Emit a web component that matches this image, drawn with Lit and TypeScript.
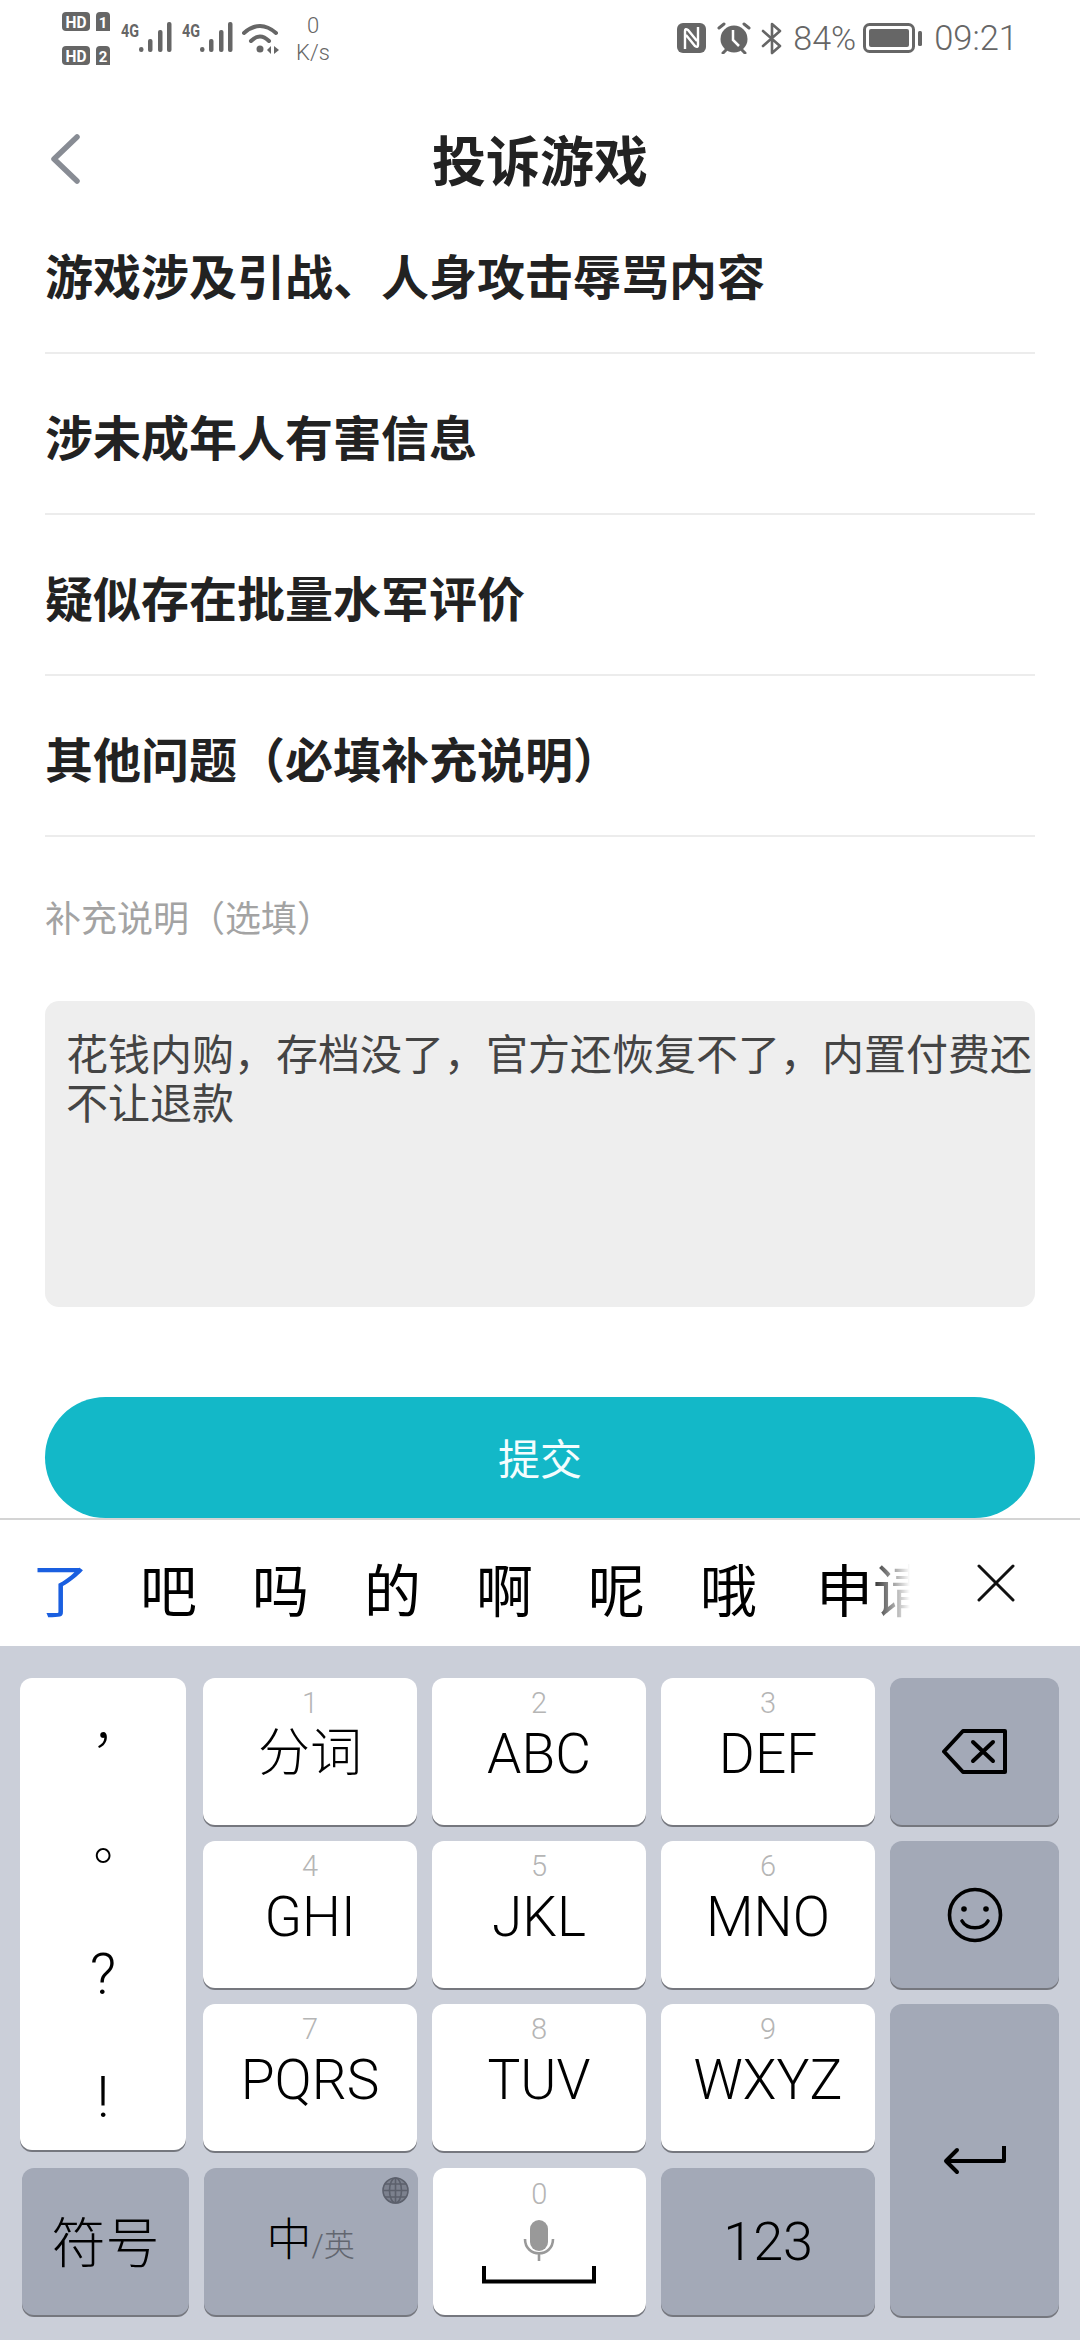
import { LitElement, html, css, svg } from "lit";
import { customElement } from "lit/decorators.js";

const signal = html`<svg class="sig" width="51" height="34" viewBox="0 -4 51 34">
  <text x="0" y="15" font-family="Roboto, sans-serif" font-weight="700" font-size="19" fill="#666" textLength="18" lengthAdjust="spacingAndGlyphs">4G</text>
  <rect x="18" y="25" width="4.5" height="5" rx="2.2" fill="#666"/>
  <rect x="27" y="17" width="4.5" height="13" rx="2" fill="#666"/>
  <rect x="37" y="8" width="4.5" height="22" rx="2" fill="#666"/>
  <rect x="46" y="0" width="4.5" height="30" rx="2" fill="#666"/>
</svg>`;

const sim = svg`<svg width="48" height="53" viewBox="0 0 48 53" font-family="Roboto, sans-serif" font-weight="700" font-size="17" text-anchor="middle">
  <rect x="0" y="0" width="28" height="19" rx="4" fill="#666"/>
  <text x="14" y="15.500" fill="#fff" textLength="21" lengthAdjust="spacingAndGlyphs">HD</text>
  <path d="M34 4a4 4 0 0 1 4-4h6a4 4 0 0 1 4 4v15h-14z" fill="#666"/>
  <text x="41" y="15.500" fill="#fff" font-size="15">1</text>
  <rect x="0" y="34" width="28" height="19" rx="4" fill="#666"/>
  <text x="14" y="49.500" fill="#fff" textLength="21" lengthAdjust="spacingAndGlyphs">HD</text>
  <path d="M34 38a4 4 0 0 1 4-4h6a4 4 0 0 1 4 4v15h-14z" fill="#666"/>
  <text x="41" y="49.500" fill="#fff" font-size="15">2</text>
</svg>`;

const wifi = html`<svg width="38" height="31" viewBox="0 0 38 31" fill="none" stroke="#666" stroke-linecap="round">
  <path d="M2 10Q18 -4 34 10" stroke-width="4"/>
  <path d="M9 18Q18 9 27 18" stroke-width="4"/>
  <circle cx="18" cy="26" r="3.5" fill="#666" stroke="none"/>
  <path d="M29 23l-4 4 4 4zM32 23l5 4-5 4z" fill="#666" stroke="none"/>
</svg>`;

const nfc = html`<svg width="29" height="30" viewBox="0 0 29 30">
  <rect width="29" height="30" rx="6" fill="#666"/>
  <path d="M8 26V8Q8 5 11 7L20 18M21 4V22Q21 25 18 23L9 12" fill="none" stroke="#fff" stroke-width="2.400"/>
</svg>`;

const alarm = html`<svg width="34" height="32" viewBox="0 0 34 32">
  <circle cx="17" cy="17" r="13.500" fill="#666"/>
  <path d="M16 8v10l6 6" fill="none" stroke="#fff" stroke-width="2.500"/>
  <path d="M2 6l5-4M32 6l-5-4M6 31l3-3M28 31l-3-3" stroke="#666" stroke-width="3" stroke-linecap="round"/>
</svg>`;

const bluetooth = html`<svg width="22" height="33" viewBox="0 0 22 33" fill="none" stroke="#666" stroke-width="2.600" stroke-linejoin="round" stroke-linecap="round">
  <path d="M2 9l17 15-8 7V2l8 7L2 24"/>
</svg>`;

const battery = html`<svg width="59" height="30" viewBox="0 0 59 30">
  <rect x="1.500" y="1.500" width="49" height="27" rx="5" fill="none" stroke="#666" stroke-width="3"/>
  <rect x="6" y="6" width="40" height="18" rx="2" fill="#666"/>
  <rect x="55" y="8" width="4" height="15" rx="1.500" fill="#666"/>
</svg>`;

const backspace = html`<svg width="66" height="45" viewBox="0 0 66 45" fill="none" stroke="#000" stroke-width="4" stroke-linejoin="round" stroke-linecap="round">
  <path d="M21 2H63V43H21L2 22.500Z"/>
  <path d="M31 13L51 32M51 13L31 32"/>
</svg>`;

const smile = html`<svg width="56" height="56" viewBox="0 0 56 56" fill="none" stroke="#000" stroke-width="3.600" stroke-linecap="round">
  <circle cx="28" cy="28" r="25.500"/>
  <circle cx="17" cy="22" r="2.800" fill="#000" stroke="none"/>
  <circle cx="39" cy="22" r="2.800" fill="#000" stroke="none"/>
  <path d="M15 34C20 43 36 43 41 34"/>
</svg>`;

const enter = html`<svg width="63" height="30" viewBox="0 0 63 30" fill="none" stroke="#000" stroke-width="4" stroke-linejoin="round">
  <path d="M61 1V16H4"/>
  <path d="M14 5L3 16L14 27" stroke-linecap="round"/>
</svg>`;

const globe = html`<svg width="27" height="27" viewBox="0 0 27 27" fill="none" stroke="#5c606c" stroke-width="1.600">
  <circle cx="13.500" cy="13.500" r="12.500" fill="#7c818e"/>
  <ellipse cx="13.500" cy="13.500" rx="6" ry="12.500"/>
  <path d="M13.500 1V26M1 13.500H26M3 7H24M3 20H24"/>
</svg>`;

const mic = html`<svg width="32" height="41" viewBox="0 0 32 41" fill="none" stroke="#999">
  <rect x="7" y="0" width="18" height="31" rx="9" fill="#999" stroke="none"/>
  <path d="M2 19C2 38 30 38 30 19" stroke-width="2.600"/>
  <path d="M16 33V41" stroke-width="2.600"/>
</svg>`;

const spaceBar = html`<svg width="114" height="18" viewBox="0 0 114 18" fill="none" stroke="#000" stroke-width="4">
  <path d="M2 0V15.500H112V0"/>
</svg>`;

const REASONS = [
  "游戏涉及引战、人身攻击辱骂内容",
  "涉未成年人有害信息",
  "疑似存在批量水军评价",
  "其他问题（必填补充说明）",
];
const CANDIDATES = ["吧", "吗", "的", "啊", "呢", "哦", "申请"];
const NUM_KEYS = [
  ["1", "分词"], ["2", "ABC"], ["3", "DEF"],
  ["4", "GHI"], ["5", "JKL"], ["6", "MNO"],
  ["7", "PQRS"], ["8", "TUV"], ["9", "WXYZ"],
];

@customElement("app-root")
export class AppRoot extends LitElement {
  static styles = css`
    :host {
      display: block;
      width: 1080px;
      height: 2340px;
      background: #fff;
      overflow: hidden;
      font-family: "Noto Sans CJK SC", sans-serif;
    }
    .status {
      height: 76px;
      padding: 0 62px 0 62px;
      display: flex;
      align-items: center;
      justify-content: space-between;
      color: #666;
      font-family: Roboto, sans-serif;
      font-weight: 300;
    }
    .status__group {
      display: flex;
      align-items: center;
    }
    .sig { margin-bottom: 6px; }
    .gap-9 { width: 9px; }
    .gap-10 { width: 10px; }
    .gap-11 { width: 11px; }
    .speed {
      width: 36px;
      margin-left: 15px;
      padding-top: 2px;
      text-align: center;
      font-size: 22px;
      line-height: 27px;
    }
    .pct { font-size: 34px; margin: 0 7px 0 10px; }
    .time { font-size: 34.500px; margin-left: 12px; }
    .header {
      height: 117px;
      box-sizing: border-box;
      padding-top: 48px;
      display: grid;
      grid-template-columns: 1fr auto 1fr;
      align-items: center;
    }
    .header__back { padding-left: 49px; display: flex; }
    .header__title {
      font-size: 54px;
      font-weight: 700;
      color: #222;
      line-height: 1;
    }
    .reasons { padding: 0 45px; }
    .reason {
      height: 161px;
      box-sizing: border-box;
      border-bottom: 2px solid #ececec;
      display: flex;
      align-items: center;
      padding-top: 2px;
      font-size: 48px;
      font-weight: 700;
      color: #222;
    }
    .note-label {
      margin: 0 45px;
      height: 164px;
      padding-top: 54px;
      box-sizing: border-box;
      font-size: 36px;
      line-height: 50px;
      color: #a3a3a3;
    }
    .note {
      margin: 0 45px;
      height: 306px;
      box-sizing: border-box;
      padding: 26px 0 0 21px;
      background: #eee;
      border-radius: 14px;
      font-size: 42px;
      line-height: 49px;
      color: #444;
    }
    .submit {
      margin: 90px 45px 0;
      height: 121px;
      border-radius: 61px;
      background: #13b8c8;
      color: #f4fdfe;
      font-size: 42px;
      padding-bottom: 2px;
      box-sizing: border-box;
      display: flex;
      align-items: center;
      justify-content: center;
    }
    .cands {
      height: 128px;
      box-sizing: border-box;
      border-top: 2px solid #d4d4d4;
      display: flex;
      background: #fff;
    }
    .cands__list {
      width: 912px;
      box-sizing: border-box;
      padding: 8px 0 0 32px;
      display: flex;
      align-items: center;
      gap: 55px;
      overflow: hidden;
      white-space: nowrap;
      font-size: 57px;
      color: #000;
      -webkit-mask-image: linear-gradient(to right, #000 865px, transparent 910px);
      mask-image: linear-gradient(to right, #000 865px, transparent 910px);
    }
    .cands__list span:last-child { margin-left: 4px; }
    .cands__active { color: #1a5fe0; margin-right: -4px; }
    .cands__close {
      flex: 1;
      display: flex;
      justify-content: center;
      padding-top: 44px;
    }
    .kb {
      height: 694px;
      box-sizing: border-box;
      padding: 32px 21px 0 20px;
      background: #cbcfd9;
      display: flex;
      gap: 15px;
    }
    .kb__left { width: 855px; }
    .kb__top { display: flex; gap: 17px; }
    .kb__grid {
      display: grid;
      grid-template-columns: repeat(3, 214px);
      grid-auto-rows: 147px;
      gap: 16px 15px;
    }
    .kb__bottom {
      display: flex;
      gap: 15px;
      margin-top: 17px;
      padding-left: 2px;
    }
    .kb__right {
      width: 169px;
      display: flex;
      flex-direction: column;
      gap: 16px;
    }
    .key {
      height: 147px;
      box-sizing: border-box;
      position: relative;
      border-radius: 12px;
      background: #fff;
      box-shadow: 0 2px 0 #75777e;
      color: #000;
      display: flex;
      flex-direction: column;
      align-items: center;
      justify-content: center;
      font-family: Roboto, "Noto Sans CJK SC", sans-serif;
      font-weight: 300;
    }
    .key--gray { background: #a3a9b7; }
    .key--enter { height: 312px; }
    .key--num { justify-content: flex-start; padding-top: 10px; }
    .key__num {
      font-size: 29px;
      line-height: 30px;
      color: #b5b5b5;
    }
    .key__label {
      margin-top: 4px;
      font-size: 55px;
      line-height: 64px;
    }
    .key__label--cjk { font-size: 52px; }
    .key__text { font-size: 54px; margin-bottom: 4px; }
    .punct {
      width: 166px;
      height: 472px;
      justify-content: flex-start;
      font-size: 50px;
    }
    .punct span {
      height: 120px;
      flex: none;
      display: flex;
      align-items: center;
      justify-content: center;
    }
    .punct__cjk { font-family: "Noto Sans CJK TC", sans-serif; }
    .punct__latin { font-size: 58px; }
    .punct span:first-child { margin-top: -1px; padding-bottom: 3px; height: 117px; }
    .punct span:nth-child(2) { margin-top: -5px; }
    .punct span:nth-child(3) { margin-top: 2px; }
    .punct span:last-child { margin-top: 3px; }
    .w-sym { width: 167px; }
    .w-lang { width: 214px; flex-direction: row; align-items: baseline; padding-top: 36px; }
    .w-space { width: 214px; justify-content: flex-start; padding-top: 11px; }
    .w-num { width: 214px; }
    .w-num .key__text { margin-bottom: 1px; }
    .lang__main { font-size: 45px; }
    .lang__sub { font-size: 31px; color: #62666f; }
    .lang__globe { position: absolute; top: 9px; right: 9px; }
    .space__num { font-size: 29px; line-height: 30px; color: #b5b5b5; }
    .space__mic { margin-top: 11px; display: flex; }
    .space__bar { margin-top: 5px; display: flex; }
  `;

  render() {
    return html`
      <div class="status">
        <div class="status__group">
          ${sim}
          <span class="gap-11"></span>${signal}
          <span class="gap-10"></span>${signal}
          <span class="gap-9"></span>${wifi}
          <div class="speed">0<br />K/s</div>
        </div>
        <div class="status__group">
          ${nfc}<span class="gap-11"></span>${alarm}<span class="gap-10"></span>${bluetooth}
          <span class="pct">84%</span>${battery}
          <span class="time">09:21</span>
        </div>
      </div>

      <div class="header">
        <div class="header__back">
          <svg width="32" height="52" viewBox="0 0 32 52" fill="none" stroke="#888c94" stroke-width="5.500" stroke-linecap="round" stroke-linejoin="round">
            <path d="M28 4L5 26L28 48" />
          </svg>
        </div>
        <div class="header__title">投诉游戏</div>
      </div>

      <div class="reasons">
        ${REASONS.map((r) => html`<div class="reason">${r}</div>`)}
      </div>

      <div class="note-label">补充说明（选填）</div>
      <div class="note">花钱内购，存档没了，官方还恢复不了，内置付费还不让退款</div>
      <div class="submit">提交</div>

      <div class="cands">
        <div class="cands__list">
          <span class="cands__active">了</span>
          ${CANDIDATES.map((c) => html`<span>${c}</span>`)}
        </div>
        <div class="cands__close">
          <svg width="38" height="38" viewBox="0 0 38 38" fill="none" stroke="#111" stroke-width="3" stroke-linecap="round">
            <path d="M2 2L36 36M36 2L2 36" />
          </svg>
        </div>
      </div>

      <div class="kb">
        <div class="kb__left">
          <div class="kb__top">
            <div class="key punct">
              <span class="punct__cjk">，</span>
              <span class="punct__cjk">。</span>
              <span class="punct__latin">?</span>
              <span class="punct__latin">!</span>
            </div>
            <div class="kb__grid">
              ${NUM_KEYS.map(
                ([n, l]) => html`<div class="key key--num">
                  <span class="key__num">${n}</span>
                  <span class="key__label ${l === "分词" ? "key__label--cjk" : ""}">${l}</span>
                </div>`
              )}
            </div>
          </div>
          <div class="kb__bottom">
            <div class="key key--gray w-sym"><span class="key__text">符号</span></div>
            <div class="key key--gray w-lang">
              <span class="lang__main">中</span><span class="lang__sub">/英</span>
              <span class="lang__globe">${globe}</span>
            </div>
            <div class="key w-space">
              <span class="space__num">0</span>
              <span class="space__mic">${mic}</span>
              <span class="space__bar">${spaceBar}</span>
            </div>
            <div class="key key--gray w-num"><span class="key__text">123</span></div>
          </div>
        </div>
        <div class="kb__right">
          <div class="key key--gray">${backspace}</div>
          <div class="key key--gray">${smile}</div>
          <div class="key key--gray key--enter">${enter}</div>
        </div>
      </div>
    `;
  }
}
